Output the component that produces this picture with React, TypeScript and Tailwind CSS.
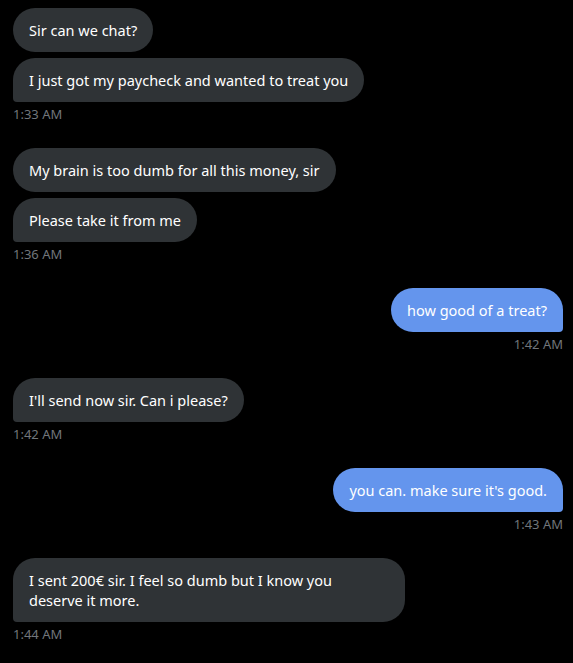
import React from 'react';

type Group = { side: 'left' | 'right'; msgs: React.ReactNode[]; time: string; wide?: boolean };

const groups: Group[] = [
  { side: 'left', msgs: ['Sir can we chat?', 'I just got my paycheck and wanted to treat you'], time: '1:33 AM' },
  { side: 'left', msgs: ['My brain is too dumb for all this money, sir', 'Please take it from me'], time: '1:36 AM' },
  { side: 'right', msgs: ['how good of a treat?'], time: '1:42 AM' },
  { side: 'left', msgs: ["I'll send now sir. Can i please?"], time: '1:42 AM' },
  { side: 'right', msgs: ["you can. make sure it's good."], time: '1:43 AM' },
  {
    side: 'left',
    msgs: [
      <>
        I sent 200€ sir. I feel so dumb but I know you
        <br />
        deserve it more.
      </>,
    ],
    time: '1:44 AM',
    wide: true,
  },
];

export default function App() {
  return (
    <div
      className="bg-black min-h-screen pl-[13px] pr-[10px] pt-[8px] flex flex-col gap-[26px]"
      style={{ fontFamily: '"Noto Sans", sans-serif' }}
    >
      {groups.map((g, gi) => {
        const left = g.side === 'left';
        return (
          <div key={gi} className={`flex flex-col ${left ? 'items-start' : 'items-end'}`}>
            <div className={`flex flex-col gap-[6px] ${left ? 'items-start' : 'items-end'}`}>
              {g.msgs.map((m, mi) => {
                const last = mi === g.msgs.length - 1;
                return (
                  <div
                    key={mi}
                    className={`px-4 py-3 text-[14.5px] leading-5 text-white rounded-[22px] ${
                      left ? 'bg-[#2f3336]' : 'bg-[#6495ed]'
                    } ${last && left ? 'rounded-bl-[4px]' : ''} ${last && !left ? 'rounded-br-[4px]' : ''} ${
                      g.wide ? 'w-[392px]' : ''
                    }`}
                  >
                    {m}
                  </div>
                );
              })}
            </div>
            <div className="mt-1 text-[13px] leading-4 text-[#71767b]">{g.time}</div>
          </div>
        );
      })}
    </div>
  );
}
